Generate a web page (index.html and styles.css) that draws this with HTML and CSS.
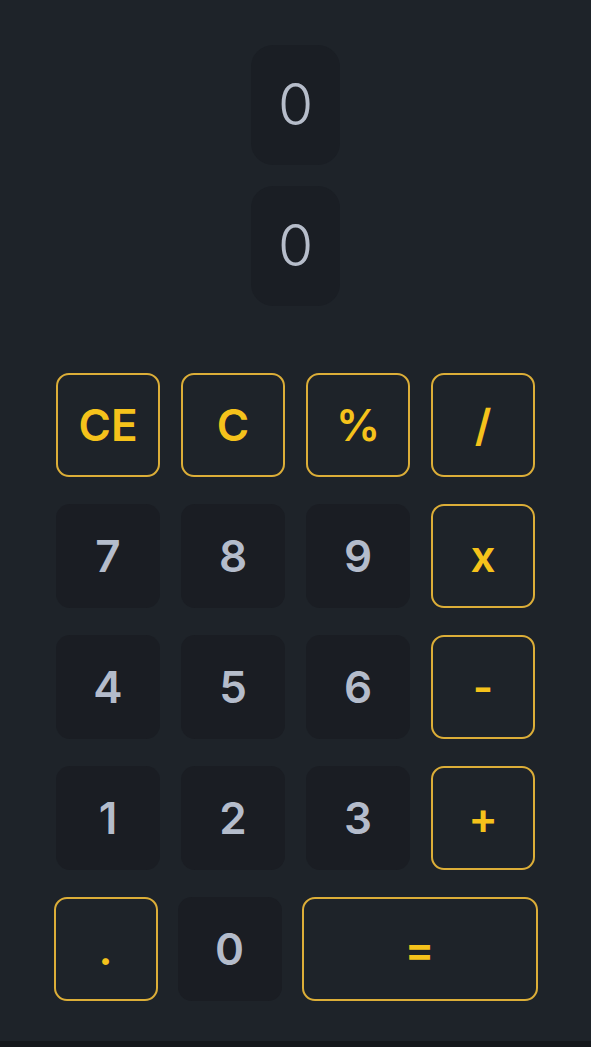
FILE: index.html
```html
<!DOCTYPE html>
<html lang="en">
<head>
<meta charset="utf-8">
<title>Calculator</title>
<link rel="stylesheet" href="styles.css">
</head>
<body>
<main class="calc">
  <section class="displays">
    <div class="display">0</div>
    <div class="display">0</div>
  </section>
  <section class="keypad">
    <div class="row">
      <button class="key op">CE</button>
      <button class="key op">C</button>
      <button class="key op">%</button>
      <button class="key op">/</button>
    </div>
    <div class="row">
      <button class="key num">7</button>
      <button class="key num">8</button>
      <button class="key num">9</button>
      <button class="key op">x</button>
    </div>
    <div class="row">
      <button class="key num">4</button>
      <button class="key num">5</button>
      <button class="key num">6</button>
      <button class="key op">-</button>
    </div>
    <div class="row">
      <button class="key num">1</button>
      <button class="key num">2</button>
      <button class="key num">3</button>
      <button class="key op">+</button>
    </div>
    <div class="row last">
      <button class="key op">.</button>
      <button class="key num">0</button>
      <button class="key op wide">=</button>
    </div>
  </section>
</main>
<div class="bottom-strip"></div>
</body>
</html>
```
FILE: styles.css
```css
* { box-sizing: border-box; }
html, body {
  margin: 0;
  padding: 0;
  background: #1e2329;
  height: 100%;
}
body {
  display: flex;
  flex-direction: column;
  font-family: Inter, "Noto Sans", sans-serif;
}
.calc {
  flex: 1;
  display: flex;
  flex-direction: column;
  align-items: center;
  padding-top: 45px;
}
.displays {
  display: flex;
  flex-direction: column;
  align-items: center;
  gap: 21px;
}
.display {
  height: 120px;
  min-width: 89px;
  padding: 0 26px;
  border-radius: 22px;
  background: #1a1e24;
  color: #b6bdca;
  font-size: 57px;
  font-weight: 300;
  line-height: 120px;
  text-align: center;
}
.keypad {
  margin-top: 67px;
  display: flex;
  flex-direction: column;
  gap: 27px;
}
.row {
  display: flex;
  justify-content: center;
  gap: 21px;
}
.row.last {
  gap: 20px;
}
.key {
  width: 104px;
  height: 104px;
  border-radius: 13px;
  font-family: Inter, "Noto Sans", sans-serif;
  font-size: 44px;
  font-weight: 600;
  padding: 0;
  display: flex;
  align-items: center;
  justify-content: center;
  cursor: pointer;
}
.op {
  background: transparent;
  border: 2px solid #dcae38;
  color: #f5c21b;
}
.num {
  background: #1a1d23;
  border: none;
  color: #b4bccb;
  border-radius: 14px;
}
.wide {
  width: 236px;
}
.bottom-strip {
  height: 6px;
  background: #15181c;
}
```
